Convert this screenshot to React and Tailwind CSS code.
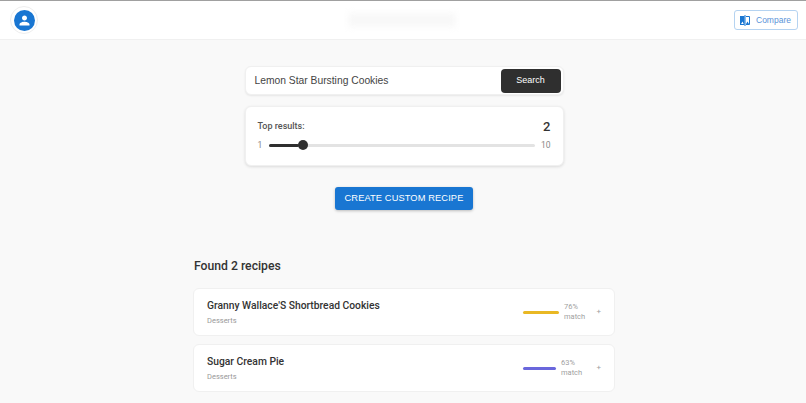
const recipes = [
  { name: "Granny Wallace'S Shortbread Cookies", category: 'Desserts', match: 76, barW: 'w-[36px]', bar: 'bg-[#e9b824]' },
  { name: 'Sugar Cream Pie', category: 'Desserts', match: 63, barW: 'w-[33px]', bar: 'bg-[#6a67dc]' },
]

function CompareIcon() {
  return (
    <svg width="10" height="11" viewBox="0 0 10 11" fill="none">
      <path d="M0 1h4.5v9H0z" fill="#1976d2" />
      <path d="M5 0v11" stroke="#1976d2" strokeWidth="1" />
      <path d="M6 1.5h3.5v8H6" stroke="#1976d2" strokeWidth="1" />
      <path d="M1 9l1.5-2.5L3.7 9z" fill="#fff" />
      <path d="M6 9l1.5-2.5L9 9z" fill="#1976d2" />
    </svg>
  )
}

function RecipeRow({ recipe }) {
  return (
    <div className="flex items-center h-[48px] pl-[13px] pr-[13px] bg-white rounded-md border border-[#f0f0f0]">
      <div className="flex-1 min-w-0">
        <div className="text-[10.3px] leading-[15px] font-medium text-[#333]">{recipe.name}</div>
        <div className="mt-[2px] text-[7.5px] leading-[11px] text-[#999]">{recipe.category}</div>
      </div>
      <div className="flex items-center w-[78px]">
        <div className={`${recipe.barW} h-[3px] rounded-full ${recipe.bar}`} />
        <div className="ml-[5px] text-[7.5px] leading-[10px] text-[#a0a0a0]">
          {recipe.match}%<br />match
        </div>
        <div className="ml-auto text-[8px] leading-none text-[#a0a0a0]">+</div>
      </div>
    </div>
  )
}

export default function App() {
  return (
    <div className="h-[403px] overflow-hidden bg-[#f9f9f9] font-['Roboto',sans-serif]">
      <header className="flex items-center justify-between h-[40px] pl-[10px] pr-[8px] bg-white border-t border-t-[#a0a0a0] border-b border-b-[#f0f0f0]">
        <div className="flex items-center justify-center w-[28px] h-[28px] rounded-full border border-[#eeeeee]">
          <div className="flex items-center justify-center w-[21px] h-[21px] rounded-full bg-[#1976d2]">
            <svg width="15" height="15" viewBox="0 0 24 24" fill="#fff">
              <path d="M12 12c2.21 0 4-1.79 4-4s-1.79-4-4-4-4 1.79-4 4 1.79 4 4 4zm0 2c-2.67 0-8 1.34-8 4v2h16v-2c0-2.66-5.33-4-8-4z" />
            </svg>
          </div>
        </div>
        <div className="w-[108px] h-[14px] ml-[32px] bg-[#f8f8f8] blur-[3px]" />
        <button className="flex items-center gap-[6px] w-[64px] h-[20px] pl-[5px] rounded-[3px] bg-white border border-[#b5d3f1] text-[8.5px] text-[#5a93d8] font-['Liberation_Sans',sans-serif]">
          <CompareIcon />
          Compare
        </button>
      </header>

      <main className="flex flex-col items-center pl-[2px]">
        <div className="flex items-center justify-between w-[319px] h-[29px] mt-[26px] pl-[9px] pr-[2px] bg-white rounded-md border border-[#f0f0f0] shadow-[0_1px_2px_rgba(0,0,0,0.08)]">
          <span className="text-[10.3px] text-[#444] font-['Liberation_Sans',sans-serif]">Lemon Star Bursting Cookies</span>
          <button className="w-[60px] h-[24px] rounded-[4px] bg-[#2f2f2f] text-white text-[9px] font-['Liberation_Sans',sans-serif]">Search</button>
        </div>

        <div className="w-[319px] h-[60px] mt-[11px] px-[12px] pt-[12px] bg-white rounded-md border border-[#f0f0f0] shadow-[0_1px_3px_rgba(0,0,0,0.12)]">
          <div className="flex items-center justify-between h-[16px]">
            <span className="text-[9px] font-medium text-[#555]">Top results:</span>
            <span className="text-[13px] font-medium text-[#333]">2</span>
          </div>
          <div className="flex items-center h-[14px] mt-[3px]">
            <span className="w-[11px] text-[8.5px] text-[#888]">1</span>
            <div className="flex items-center flex-1 h-[3px] rounded-full bg-[#e3e3e3]">
              <div className="w-[30px] h-[3px] rounded-full bg-[#2f2f2f]" />
              <div className="w-[10px] h-[10px] -ml-[1px] rounded-full bg-[#2f2f2f]" />
            </div>
            <span className="w-[16px] text-right text-[8.5px] text-[#888]">10</span>
          </div>
        </div>

        <button className="w-[138px] h-[23px] mt-[21px] rounded-[3px] bg-[#1976d2] text-white text-[9.3px] tracking-[0.1px] shadow-[0_1px_3px_rgba(0,0,0,0.25)] font-['Liberation_Sans',sans-serif]">
          CREATE CUSTOM RECIPE
        </button>

        <div className="w-[422px] mt-[47px]">
          <h2 className="pl-px text-[12.2px] leading-[18px] font-medium text-[#333]">Found 2 recipes</h2>
          <div className="flex flex-col gap-[8px] mt-[13px]">
            {recipes.map((r) => (
              <RecipeRow key={r.name} recipe={r} />
            ))}
          </div>
        </div>
      </main>
    </div>
  )
}
